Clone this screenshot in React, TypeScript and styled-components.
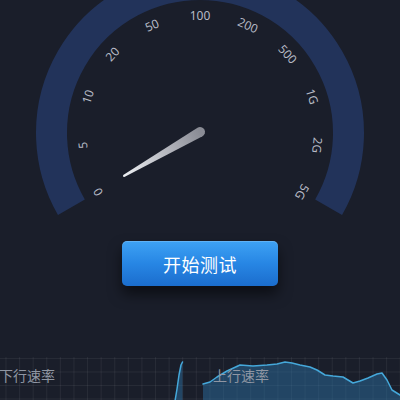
import styled, { createGlobalStyle } from "styled-components";

const GlobalStyle = createGlobalStyle`
  html, body {
    margin: 0;
    padding: 0;
    background: #1a1e2a;
  }
  body {
    font-family: "Noto Sans", "Noto Sans CJK SC", sans-serif;
  }
`;

const Page = styled.div`
  width: 400px;
  height: 400px;
  overflow: hidden;
  display: flex;
  flex-direction: column;
  background: #1a1e2a;
`;
const GaugeSvg = styled.svg`
  display: block;
  width: 400px;
  height: 226px;
`;
const ButtonRow = styled.div`
  display: flex;
  justify-content: center;
  padding-top: 15px;
`;
const StartButton = styled.button`
  width: 156px;
  height: 45px;
  border: none;
  border-radius: 5px;
  background: linear-gradient(180deg, #3ea2f4 0%, #2786e4 50%, #1b6dcd 100%);
  box-shadow: 0 8px 14px rgba(0, 0, 0, 0.55), inset 0 1px 0 rgba(255, 255, 255, 0.18);
  color: #ffffff;
  font-family: "Noto Sans CJK SC", sans-serif;
  font-size: 18px;
  letter-spacing: 0.5px;
  cursor: pointer;
`;
const ChartStrip = styled.div`
  margin-top: auto;
  margin-left: -2px;
  height: 43px;
  display: grid;
  grid-template-columns: 188px 1fr;
  column-gap: 15px;
  background-color: #1a1e2a;
  background-image: linear-gradient(rgba(255, 255, 255, 0.06) 1px, transparent 1px),
    linear-gradient(90deg, rgba(255, 255, 255, 0.06) 1px, transparent 1px);
  background-size: 13.6px 13.5px;
  background-position: 7.5px 1px;
`;
const Panel = styled.div<{ $pad: number }>`
  position: relative;
  padding-left: ${(p) => p.$pad}px;
  padding-top: 8px;
`;
const PanelLabel = styled.div`
  position: relative;
  z-index: 1;
  font-family: "Noto Sans CJK SC", sans-serif;
  font-size: 14px;
  line-height: 20px;
  color: #8f96a3;
`;
const ChartSvg = styled.svg`
  position: absolute;
  inset: 0;
  width: 100%;
  height: 100%;
  overflow: visible;
`;

const CX = 200;
const CY = 133;
const labels = ["0", "5", "10", "20", "50", "100", "200", "500", "1G", "2G", "5G"];

function Gauge() {
  const r = 148.5;
  const a0 = (210 * Math.PI) / 180;
  const sx = CX + r * Math.cos(a0);
  const sy = CY - r * Math.sin(a0);
  const ex = CX + r * Math.cos(-Math.PI / 6);
  const ey = CY - r * Math.sin(-Math.PI / 6);
  return (
    <GaugeSvg viewBox="0 0 400 226">
      <defs>
        <linearGradient id="needle" x1="0" y1="0" x2="89" y2="0" gradientUnits="userSpaceOnUse">
          <stop offset="0" stopColor="#8a8c95" />
          <stop offset="1" stopColor="#eef0f4" />
        </linearGradient>
      </defs>
      <path
        d={`M ${sx} ${sy} A ${r} ${r} 0 1 1 ${ex} ${ey}`}
        fill="none"
        stroke="#22335a"
        strokeWidth={31}
      />
      {labels.map((t, i) => {
        const deg = 210 - 24 * i;
        const rad = (deg * Math.PI) / 180;
        const x = CX + 118 * Math.cos(rad);
        const y = CY - 118 * Math.sin(rad);
        return (
          <text
            key={t}
            transform={`translate(${x} ${y}) rotate(${90 - deg})`}
            textAnchor="middle"
            dominantBaseline="central"
            fill="#b7bbc6"
            fontSize="12"
            fontFamily="'Noto Sans', sans-serif"
          >
            {t}
          </text>
        );
      })}
      <g transform={`translate(${CX} ${CY - 1}) rotate(150)`}>
        <path d="M 0 -5 L 88 -1.1 L 89 0 L 88 1.1 L 0 5 A 5 5 0 0 1 0 -5 Z" fill="url(#needle)" />
      </g>
    </GaugeSvg>
  );
}

const upPoints: [number, number][] = [
  [2, 27], [9, 25], [16, 20], [26, 14], [39, 8], [52, 9], [66, 8], [76, 7],
  [84, 5], [91, 6], [99, 8], [109, 10], [116, 13], [124, 18], [132, 19], [142, 20],
  [152, 26], [159, 24], [167, 21], [176, 17], [181, 16], [186, 23], [191, 33], [199, 38], [203, 41],
];
const downPoints: [number, number][] = [
  [177, 44], [179, 32], [181, 18], [183, 8], [184.5, 5],
];

function AreaChart({ points }: { points: [number, number][] }) {
  const line = points.map(([x, y]) => `${x},${y}`).join(" ");
  const first = points[0];
  const last = points[points.length - 1];
  const area = `${first[0]},44 ${line} ${last[0]},44`;
  return (
    <ChartSvg>
      <polygon points={area} fill="rgba(44, 118, 170, 0.45)" />
      <polyline
        points={line}
        fill="none"
        stroke="#45a8da"
        strokeWidth={1.5}
        strokeLinejoin="round"
        strokeLinecap="round"
      />
    </ChartSvg>
  );
}

export default function App() {
  return (
    <>
      <GlobalStyle />
      <Page>
        <Gauge />
        <ButtonRow>
          <StartButton>开始测试</StartButton>
        </ButtonRow>
        <ChartStrip>
          <Panel $pad={1}>
            <AreaChart points={downPoints} />
            <PanelLabel>下行速率</PanelLabel>
          </Panel>
          <Panel $pad={12}>
            <AreaChart points={upPoints} />
            <PanelLabel>上行速率</PanelLabel>
          </Panel>
        </ChartStrip>
      </Page>
    </>
  );
}
